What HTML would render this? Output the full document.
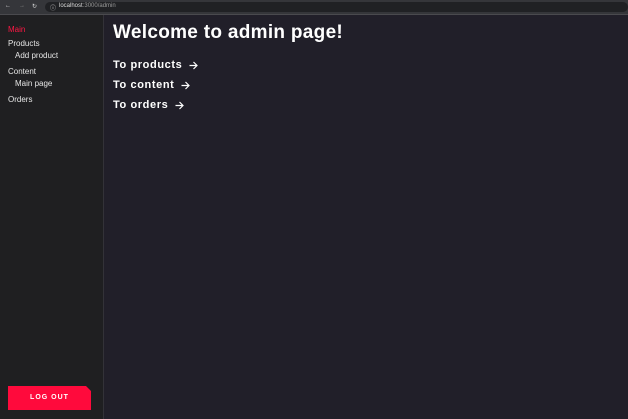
<!DOCTYPE html>
<html><head><style>
body{margin:0;width:628px;height:419px;overflow:hidden;font-family:"Liberation Sans",sans-serif;background:#211f29;position:relative}
.bar{position:absolute;left:0;top:0;width:628px;height:14px;background:#35363a;border-bottom:1px solid #4a4a4e}
.bar span{position:absolute;color:#ddd;font-size:6px;top:3px}
.url{position:absolute;left:45px;top:2px;width:583px;height:10px;background:#202124;border-radius:5px}
.side{position:absolute;left:0;top:15px;width:103px;height:404px;background:#1f1f21;border-right:1px solid #333238}
.side div{position:absolute;color:#e6e6e6;font-size:8px}
h1{position:absolute;left:113px;top:22px;margin:0;color:#fff;font-size:19px;font-weight:bold;letter-spacing:0.3px}
.l{position:absolute;left:113px;color:#fff;font-size:11px;font-weight:bold;letter-spacing:0.6px;display:flex;align-items:center}
.l svg{margin-left:7px}
.btn{position:absolute;left:8px;top:386px;width:83px;height:24px;background:#ff0a3c;clip-path:polygon(0 0,78px 0,83px 5px,83px 24px,0 24px);color:#fff;font-size:7px;font-weight:bold;letter-spacing:1px;text-align:center;line-height:24px}
</style></head><body>
<div class="bar"><span style="left:5px">←</span><span style="left:19px;color:#888">→</span><span style="left:32px">↻</span><div class="url"><span style="left:5px;top:1px">ⓘ</span><span style="left:14px;top:1px">localhost<span style="position:static;color:#999">:3000/admin</span></span></div></div>
<div class="side">
<div style="left:8px;top:10px;color:#ff1744">Main</div>
<div style="left:8px;top:24px">Products</div>
<div style="left:15px;top:36px">Add product</div>
<div style="left:8px;top:52px">Content</div>
<div style="left:15px;top:64px">Main page</div>
<div style="left:8px;top:80px">Orders</div>
</div>
<h1>Welcome to admin page!</h1>
<div class="l" style="top:59px">To products<svg width="9" height="9" viewBox="0 0 9 9"><path d="M0.5 4.5H8M4.5 1L8 4.5L4.5 8" stroke="#fff" stroke-width="1.2" fill="none"/></svg></div>
<div class="l" style="top:79px">To content<svg width="9" height="9" viewBox="0 0 9 9"><path d="M0.5 4.5H8M4.5 1L8 4.5L4.5 8" stroke="#fff" stroke-width="1.2" fill="none"/></svg></div>
<div class="l" style="top:99px">To orders<svg width="9" height="9" viewBox="0 0 9 9"><path d="M0.5 4.5H8M4.5 1L8 4.5L4.5 8" stroke="#fff" stroke-width="1.2" fill="none"/></svg></div>
<div class="btn">LOG OUT</div>
</body></html>
